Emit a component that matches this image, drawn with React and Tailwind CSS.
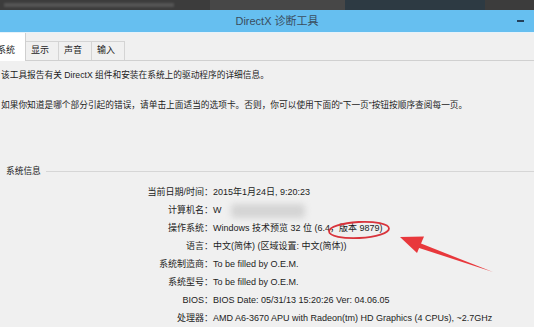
import React from 'react';

const rows = [
  { label: '当前日期/时间：', value: '2015年1月24日, 9:20:23' },
  { label: '计算机名：', value: 'name' },
  { label: '操作系统：', value: 'Windows 技术预览 32 位 (6.4，版本 9879)' },
  { label: '语言：', value: '中文(简体) (区域设置: 中文(简体))' },
  { label: '系统制造商：', value: 'To be filled by O.E.M.' },
  { label: '系统型号：', value: 'To be filled by O.E.M.' },
  { label: 'BIOS：', value: 'BIOS Date: 05/31/13 15:20:26 Ver: 04.06.05' },
  { label: '处理器：', value: 'AMD A6-3670 APU with Radeon(tm) HD Graphics (4 CPUs), ~2.7GHz' },
];

const Tab = ({ children, active }) => {
  if (active) {
    return (
      <div className="h-[28px] w-[26px] bg-white border-r border-[#cfcfcf] flex items-end pb-[4px] -mb-px">
        <span className="-ml-[3px]">{children}</span>
      </div>
    );
  }
  return (
    <div className="h-[19px] bg-[#f0f0f0] border border-b-0 border-l-0 border-[#d4d4d4] flex items-center px-[5px] w-[33px]">
      {children}
    </div>
  );
};

export default function App() {
  return (
    <div
      className="relative w-[534px] h-[327px] overflow-hidden bg-[#f0f0f0] text-[#1c1c1c] text-[9px]"
      style={{ fontFamily: '"Liberation Sans", "Noto Sans CJK SC", sans-serif' }}
    >
      {/* dark strip of the window behind */}
      <div className="h-[10px] bg-[#3c3c3c] flex items-center">
        <div className="ml-[4px] w-[170px] h-[4px] bg-[#555] blur-[1px]" />
        <div className="ml-[36px] w-[135px] h-[10px] bg-[#474747]" />
        <div className="w-[140px] h-[10px] bg-[#2d3a43]" />
      </div>

      {/* title bar */}
      <div className="relative h-[22px] bg-[#66bff0] flex items-center justify-center text-[11px] text-[#3a4d5e]">
        <span className="pl-[20px]">DirectX 诊断工具</span>
        <div className="absolute right-[10px] top-[10px] w-[7px] h-[2px] bg-[#24405a]" />
      </div>

      {/* tabs */}
      <div className="h-[29px] flex items-end border-b border-[#d0d0d0] border-t border-t-[#e6f2fa]">
        <Tab active>系统</Tab>
        <Tab>显示</Tab>
        <Tab>声音</Tab>
        <Tab>输入</Tab>
      </div>

      {/* description */}
      <div className="pl-[1px] pt-[8px] leading-[12px] text-[8.7px]">
        <p>该工具报告有关 DirectX 组件和安装在系统上的驱动程序的详细信息。</p>
        <p className="mt-[18px]">如果你知道是哪个部分引起的错误，请单击上面适当的选项卡。否则，你可以使用下面的“下一页”按钮按顺序查阅每一页。</p>
      </div>

      {/* system info group */}
      <div className="mt-[54px] flex items-center leading-[12px]">
        <span className="pl-[6px] pr-[5px] text-[8.7px]">系统信息</span>
        <div className="flex-1 h-px bg-[#d6d6d6]" />
      </div>

      <div className="mt-[7px] flex flex-col">
        {rows.map((r) => (
          <div key={r.label} className="flex h-[18px] items-center whitespace-nowrap">
            <div className="w-[213px] text-right">{r.label}</div>
            <div className="flex items-center">
              {r.value === 'name' ? (
                <>
                  <span>W</span>
                  <span className="inline-block ml-[9px] w-[74px] h-[14px] bg-[#d4d4d4] rounded-[4px] blur-[3px]" />
                </>
              ) : (
                r.value
              )}
            </div>
          </div>
        ))}
      </div>

      {/* red annotation */}
      <svg className="absolute left-0 top-0 pointer-events-none" width="534" height="327" viewBox="0 0 534 327">
        <ellipse cx="359" cy="230" rx="30" ry="8" fill="none" stroke="#d8343c" strokeWidth="1.8" transform="rotate(-3 359 230)" />
        <polygon points="493,272 418.5,242.6 416.8,247.2" fill="#e8383c" />
        <polygon points="400,237 424,236.5 417,253" fill="#e8383c" />
      </svg>
    </div>
  );
}
